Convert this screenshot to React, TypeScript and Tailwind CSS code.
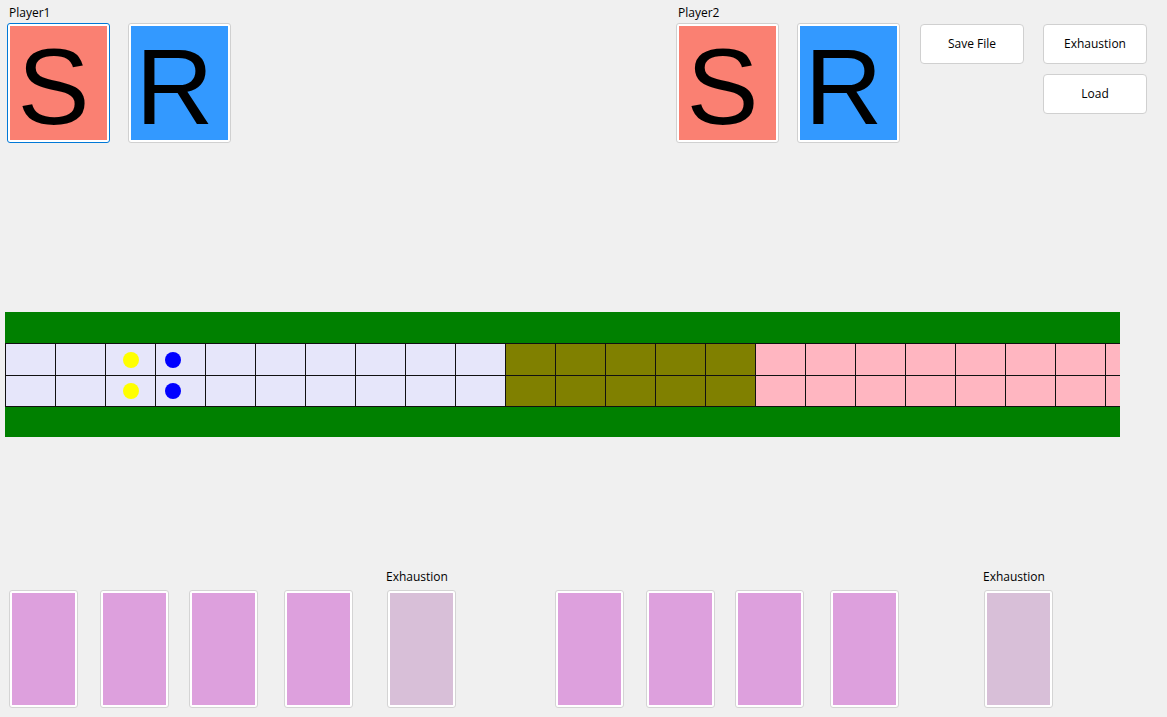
import React from "react";

const font = { fontFamily: '"Open Sans", "Noto Sans", sans-serif' };

const LetterButton = ({
  letter,
  fill,
  focused = false,
}: {
  letter: string;
  fill: string;
  focused?: boolean;
}) => (
  <div
    className={
      "w-[103px] h-[120px] rounded-[3px] border bg-white p-[2px] " +
      (focused ? "border-[#0078d7]" : "border-[#d0d0d0]")
    }
  >
    <div
      className={"w-full h-full flex items-center justify-center pr-[10px] pt-[8px] text-black " + fill}
      style={{ fontFamily: '"Liberation Sans", Arial, sans-serif' }}
    >
      <span className="text-[108px] leading-none">{letter}</span>
    </div>
  </div>
);

const PlayerGroup = ({ name, focused }: { name: string; focused?: boolean }) => (
  <div className="flex flex-col pt-[5px]">
    <div className="h-[18px] pl-[2px] text-[12px] leading-[15px] text-black">{name}</div>
    <div className="flex gap-[18px]">
      <LetterButton letter="S" fill="bg-[#fa8072]" focused={focused} />
      <LetterButton letter="R" fill="bg-[#3399ff]" />
    </div>
  </div>
);

const WinButton = ({ label }: { label: string }) => (
  <button className="w-[104px] h-[40px] rounded-[4px] border border-[#d0d0d0] bg-white text-[12px] text-black">
    {label}
  </button>
);

type Cell = { color: string; dot?: "yellow" | "blue" };

const rowCells = (): Cell[] => {
  const cells: Cell[] = [];
  for (let i = 0; i < 10; i++) cells.push({ color: "bg-[#e6e6fa]" });
  for (let i = 0; i < 5; i++) cells.push({ color: "bg-[#808000]" });
  for (let i = 0; i < 8; i++) cells.push({ color: "bg-[#ffb6c1]" });
  cells[2].dot = "yellow";
  cells[3].dot = "blue";
  return cells;
};

const TrackRow = ({ last = false }: { last?: boolean }) => (
  <div className="flex">
    {rowCells().map((c, i) => (
      <div
        key={i}
        className={
          "w-[50px] h-[32px] shrink-0 border-l border-t border-[#111] flex items-center " +
          (last ? "border-b " : "") +
          (c.dot === "blue" ? "justify-start pl-[9px] " : "justify-center ") +
          c.color
        }
      >
        {c.dot === "yellow" && <div className="w-[16px] h-[16px] rounded-full bg-[#ffff00]" />}
        {c.dot === "blue" && <div className="w-[16px] h-[16px] rounded-full bg-[#0000ff]" />}
      </div>
    ))}
  </div>
);

const Card = ({ exhaustion = false, ml }: { exhaustion?: boolean; ml: string }) => (
  <div className={"flex flex-col " + ml}>
    <div className="h-[23px] text-[12px] leading-[15px] pt-[2px] -ml-[1px] text-black whitespace-nowrap">
      {exhaustion ? "Exhaustion" : ""}
    </div>
    <div className="w-[69px] h-[118px] rounded-[3px] border border-[#d4d4d4] bg-white p-[2px]">
      <div className={"w-full h-full " + (exhaustion ? "bg-[#d8bfd8]" : "bg-[#dda0dd]")} />
    </div>
  </div>
);

export default function App() {
  return (
    <div className="w-[1167px] h-[717px] bg-[#f0f0f0] overflow-hidden" style={font}>
      {/* top: players and file buttons */}
      <div className="flex">
        <div className="ml-[7px]">
          <PlayerGroup name="Player1" focused />
        </div>
        <div className="ml-[445px]">
          <PlayerGroup name="Player2" />
        </div>
        <div className="ml-[20px] mt-[24px]">
          <WinButton label="Save File" />
        </div>
        <div className="ml-[19px] mt-[24px] flex flex-col gap-[10px]">
          <WinButton label="Exhaustion" />
          <WinButton label="Load" />
        </div>
      </div>

      {/* track */}
      <div className="mt-[169px] ml-[5px] w-[1115px] overflow-hidden">
        <div className="h-[31px] bg-[#008000]" />
        <TrackRow />
        <TrackRow last />
        <div className="h-[30px] bg-[#008000]" />
      </div>

      {/* hands */}
      <div className="mt-[130px] flex">
        <Card ml="ml-[9px]" />
        <Card ml="ml-[22px]" />
        <Card ml="ml-[20px]" />
        <Card ml="ml-[26px]" />
        <Card ml="ml-[34px]" exhaustion />
        <Card ml="ml-[99px]" />
        <Card ml="ml-[22px]" />
        <Card ml="ml-[20px]" />
        <Card ml="ml-[26px]" />
        <Card ml="ml-[85px]" exhaustion />
      </div>
    </div>
  );
}
